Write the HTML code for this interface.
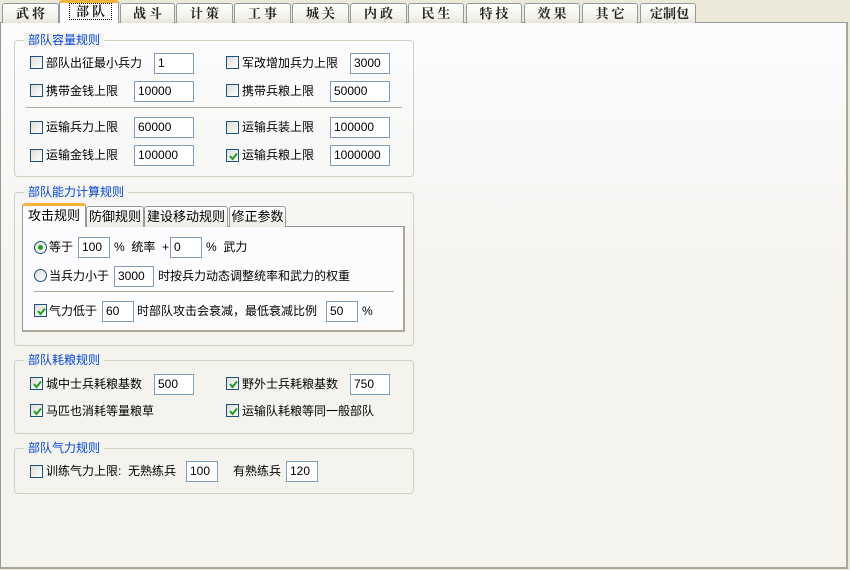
<!DOCTYPE html>
<html><head><meta charset="utf-8">
<style>
*{box-sizing:border-box;margin:0;padding:0}
body{width:850px;height:570px;background:#ece9d8;position:relative;overflow:hidden;font-family:"Liberation Sans","Noto Sans CJK SC","WenQuanYi Zen Hei",sans-serif;font-size:12px;color:#000}
.a{position:absolute}
.panel{left:0;top:22px;width:848px;height:547px;border:1px solid #919b9c;border-right:2px solid #aca899;border-bottom:2px solid #aca899;background:linear-gradient(#fcfcfe 0px,#f4f3ee 280px,#f4f3ee)}
.tab{top:3px;height:20px;border:1px solid #919b9c;border-bottom:none;border-radius:3px 3px 0 0;background:linear-gradient(#fff,#f2f1ea 70%,#e6e4d8);font-family:"Liberation Serif","Noto Serif CJK SC",serif;font-weight:bold;color:#222;font-size:13px;letter-spacing:3px;text-align:center;line-height:19px;padding-left:3px}
.tab.sel{top:0;height:23px;background:#fcfcfe;border-top:3px solid #f8b239;line-height:18px;z-index:2}
.tab.sel span{border:1px dotted #000;padding:0 3px 0 6px}
.grp{border:1px solid #d0d0bf;border-radius:4px}
.tt{color:#0046d5;background:#f4f3ee;padding:0 4px;line-height:14px}
.cb{width:13px;height:13px;border:1px solid #1c5180;background:linear-gradient(135deg,#dcdcd7,#fff)}
.cb svg{position:absolute;left:1px;top:1px}
.rd{width:13px;height:13px;border:1px solid #1c5180;border-radius:50%;background:linear-gradient(135deg,#dcdcd7,#fff)}
.in{height:21px;border:1px solid #7f9db9;background:#fff;padding-left:3px;line-height:19px}
.t{line-height:16px;white-space:nowrap}
.sep{height:2px;border-top:1px solid #aca899;border-bottom:1px solid #fff}
.itab{top:206px;height:21px;border:1px solid #919b9c;border-bottom:none;border-radius:3px 3px 0 0;background:linear-gradient(#fff,#ecebe4);line-height:20px;text-align:center;font-size:13px}
</style></head><body>
<div class="a panel"></div>
<div class="a tab" style="left:2px;width:57px">武将</div>
<div class="a tab sel" style="left:59px;width:60px"><span>部队</span></div>
<div class="a tab" style="left:120px;width:55px">战斗</div>
<div class="a tab" style="left:176px;width:57px">计策</div>
<div class="a tab" style="left:234px;width:57px">工事</div>
<div class="a tab" style="left:292px;width:57px">城关</div>
<div class="a tab" style="left:350px;width:57px">内政</div>
<div class="a tab" style="left:408px;width:56px">民生</div>
<div class="a tab" style="left:466px;width:56px">特技</div>
<div class="a tab" style="left:524px;width:56px">效果</div>
<div class="a tab" style="left:582px;width:56px">其它</div>
<div class="a tab" style="left:640px;width:56px;letter-spacing:0">定制包</div>

<div class="a grp" style="left:14px;top:40px;width:400px;height:137px"></div>
<div class="a tt" style="left:24px;top:33px">部队容量规则</div>
<div class="a cb" style="left:30px;top:56px"></div><div class="a t" style="left:46px;top:55px">部队出征最小兵力</div><div class="a in" style="left:154px;top:53px;width:40px">1</div>
<div class="a cb" style="left:226px;top:56px"></div><div class="a t" style="left:242px;top:55px">军改增加兵力上限</div><div class="a in" style="left:350px;top:53px;width:40px">3000</div>
<div class="a cb" style="left:30px;top:84px"></div><div class="a t" style="left:46px;top:83px">携带金钱上限</div><div class="a in" style="left:134px;top:81px;width:60px">10000</div>
<div class="a cb" style="left:226px;top:84px"></div><div class="a t" style="left:242px;top:83px">携带兵粮上限</div><div class="a in" style="left:330px;top:81px;width:60px">50000</div>
<div class="a sep" style="left:26px;top:107px;width:376px"></div>
<div class="a cb" style="left:30px;top:121px"></div><div class="a t" style="left:46px;top:119px">运输兵力上限</div><div class="a in" style="left:134px;top:117px;width:60px">60000</div>
<div class="a cb" style="left:226px;top:121px"></div><div class="a t" style="left:242px;top:119px">运输兵装上限</div><div class="a in" style="left:330px;top:117px;width:60px">100000</div>
<div class="a cb" style="left:30px;top:149px"></div><div class="a t" style="left:46px;top:147px">运输金钱上限</div><div class="a in" style="left:134px;top:145px;width:60px">100000</div>
<div class="a cb" style="left:226px;top:149px"><svg width="11" height="11"><path d="M2 5 L4.5 8 L9 2.5" stroke="#21a121" stroke-width="2" fill="none"/></svg></div><div class="a t" style="left:242px;top:147px">运输兵粮上限</div><div class="a in" style="left:330px;top:145px;width:60px">1000000</div>

<div class="a grp" style="left:14px;top:192px;width:400px;height:154px"></div>
<div class="a tt" style="left:24px;top:185px">部队能力计算规则</div>
<div class="a" style="left:22px;top:226px;width:383px;height:106px;border:1px solid #919b9c;border-right:2px solid #aca899;border-bottom:2px solid #aca899;background:#fcfcfe"></div>
<div class="a itab" style="left:22px;width:64px;top:203px;height:24px;border-top:3px solid #f8b239;background:#fcfcfe;line-height:19px;z-index:2">攻击规则</div>
<div class="a itab" style="left:86px;width:58px">防御规则</div>
<div class="a itab" style="left:144px;width:84px">建设移动规则</div>
<div class="a itab" style="left:229px;width:57px">修正参数</div>
<div class="a rd" style="left:34px;top:241px"><svg width="11" height="11" style="position:absolute;left:0;top:0"><circle cx="5.5" cy="5.5" r="2.5" fill="#21a121"/></svg></div>
<div class="a t" style="left:49px;top:239px">等于</div><div class="a in" style="left:78px;top:237px;width:32px">100</div>
<div class="a t" style="left:114px;top:239px">% &nbsp;统率 &nbsp;+</div><div class="a in" style="left:170px;top:237px;width:32px">0</div>
<div class="a t" style="left:206px;top:239px">% &nbsp;武力</div>
<div class="a rd" style="left:34px;top:269px"></div>
<div class="a t" style="left:49px;top:268px">当兵力小于</div><div class="a in" style="left:114px;top:266px;width:40px">3000</div>
<div class="a t" style="left:158px;top:268px">时按兵力动态调整统率和武力的权重</div>
<div class="a sep" style="left:34px;top:291px;width:360px"></div>
<div class="a cb" style="left:34px;top:304px"><svg width="11" height="11"><path d="M2 5 L4.5 8 L9 2.5" stroke="#21a121" stroke-width="2" fill="none"/></svg></div>
<div class="a t" style="left:49px;top:303px">气力低于</div><div class="a in" style="left:102px;top:301px;width:32px">60</div>
<div class="a t" style="left:137px;top:303px">时部队攻击会衰减，最低衰减比例</div><div class="a in" style="left:326px;top:301px;width:32px">50</div>
<div class="a t" style="left:362px;top:303px">%</div>

<div class="a grp" style="left:14px;top:360px;width:400px;height:74px"></div>
<div class="a tt" style="left:24px;top:353px">部队耗粮规则</div>
<div class="a cb" style="left:30px;top:377px"><svg width="11" height="11"><path d="M2 5 L4.5 8 L9 2.5" stroke="#21a121" stroke-width="2" fill="none"/></svg></div><div class="a t" style="left:46px;top:376px">城中士兵耗粮基数</div><div class="a in" style="left:154px;top:374px;width:40px">500</div>
<div class="a cb" style="left:226px;top:377px"><svg width="11" height="11"><path d="M2 5 L4.5 8 L9 2.5" stroke="#21a121" stroke-width="2" fill="none"/></svg></div><div class="a t" style="left:242px;top:376px">野外士兵耗粮基数</div><div class="a in" style="left:350px;top:374px;width:40px">750</div>
<div class="a cb" style="left:30px;top:404px"><svg width="11" height="11"><path d="M2 5 L4.5 8 L9 2.5" stroke="#21a121" stroke-width="2" fill="none"/></svg></div><div class="a t" style="left:46px;top:403px">马匹也消耗等量粮草</div>
<div class="a cb" style="left:226px;top:404px"><svg width="11" height="11"><path d="M2 5 L4.5 8 L9 2.5" stroke="#21a121" stroke-width="2" fill="none"/></svg></div><div class="a t" style="left:242px;top:403px">运输队耗粮等同一般部队</div>

<div class="a grp" style="left:14px;top:448px;width:400px;height:46px"></div>
<div class="a tt" style="left:24px;top:441px">部队气力规则</div>
<div class="a cb" style="left:30px;top:465px"></div><div class="a t" style="left:46px;top:463px">训练气力上限: &nbsp;无熟练兵</div><div class="a in" style="left:186px;top:461px;width:32px">100</div>
<div class="a t" style="left:233px;top:463px">有熟练兵</div><div class="a in" style="left:286px;top:461px;width:32px">120</div>
</body></html>
